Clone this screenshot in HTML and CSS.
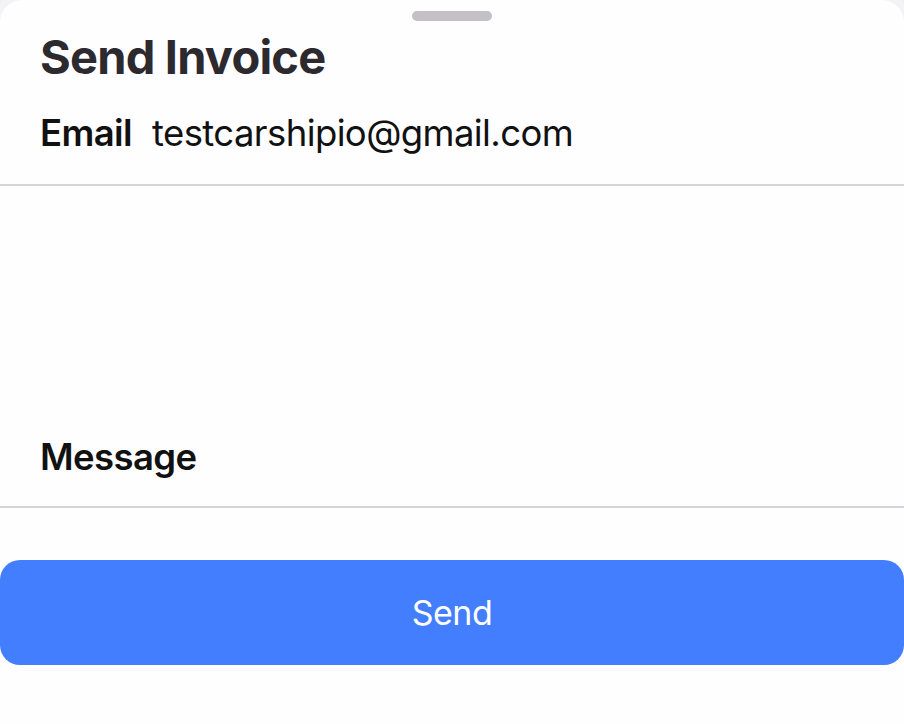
FILE: index.html
```html
<!DOCTYPE html>
<html lang="en">
<head>
  <meta charset="UTF-8" />
  <meta name="viewport" content="width=device-width, initial-scale=1.0"/>
  <title>Send Invoice</title>
  <link rel="stylesheet" href="styles.css">
</head>
<body>
  <div class="sheet">
    <div class="grabber"></div>
    <h1 class="sheet-title">Send Invoice</h1>
    <form class="invoice-form">
      <div class="field email-field">
        <label for="email">Email</label>
        <input type="email" id="email" name="email" value="testcarshipio@gmail.com" />
      </div>
      <div class="field message-field">
        <label for="message">Message</label>
      </div>
      <button type="submit" class="send-btn">Send</button>
    </form>
  </div>
</body>
</html>
```

FILE: styles.css
```css
body {
  font-family: Inter, "Noto Sans", sans-serif;
  background-color: #f3f2f4;
  margin: 0;
}
.sheet {
  background-color: #fefdff;
  border-radius: 22px 22px 0 0;
  min-height: 724px;
  display: flex;
  flex-direction: column;
}
.grabber {
  width: 80px;
  height: 10px;
  border-radius: 5px;
  background-color: #c4c1c6;
  margin: 11px auto 0;
}
.sheet-title {
  margin: 8px 0 0 40px;
  font-size: 47px;
  line-height: 56px;
  font-weight: 700;
  letter-spacing: -0.8px;
  color: #2c2a2f;
}
.invoice-form {
  display: flex;
  flex-direction: column;
}
.field {
  display: flex;
  align-items: flex-end;
  gap: 20px;
  padding: 0 40px;
  border-bottom: 2px solid #d5d3d6;
  box-sizing: border-box;
}
.field label {
  font-size: 36.5px;
  font-weight: 600;
  letter-spacing: -0.6px;
  color: #111;
}
.email-field {
  height: 101px;
  padding-bottom: 29px;
}
.email-field input {
  flex: 1;
  border: none;
  outline: none;
  background: transparent;
  padding: 0;
  font-family: inherit;
  font-size: 36.5px;
  letter-spacing: -0.6px;
  color: #111;
}
.message-field {
  height: 322px;
  padding-bottom: 27px;
}
.send-btn {
  margin-top: 52px;
  height: 105px;
  width: 100%;
  border: none;
  border-radius: 20px;
  background-color: #437efe;
  color: #ffffff;
  font-family: inherit;
  font-size: 34px;
  letter-spacing: -0.5px;
  cursor: pointer;
}
.send-btn:hover {
  background-color: #3a72ea;
}
```
